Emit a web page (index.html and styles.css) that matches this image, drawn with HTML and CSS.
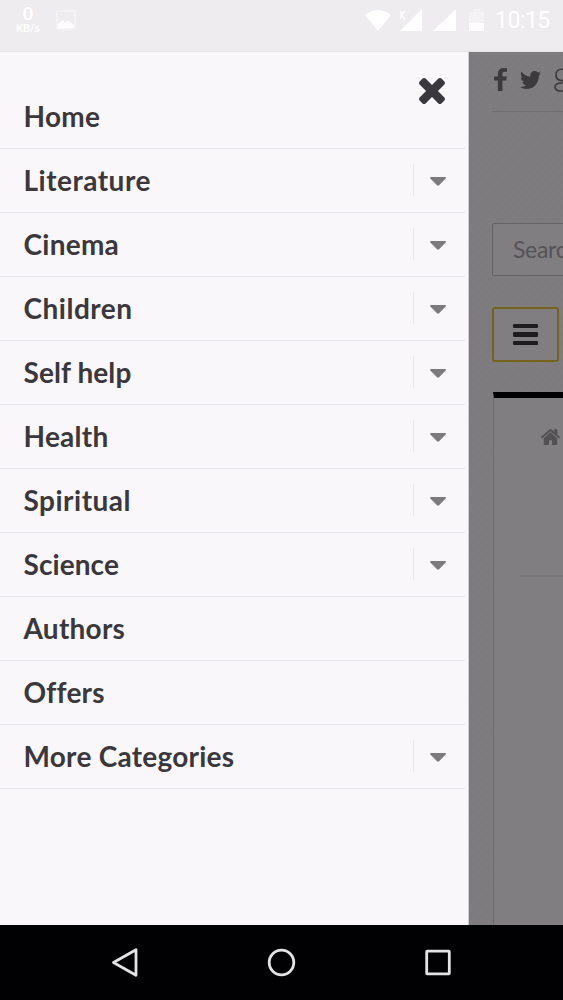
FILE: index.html
```html
<!DOCTYPE html>
<html lang="en">
<head>
<meta charset="utf-8">
<meta name="viewport" content="width=device-width, initial-scale=1">
<title>Menu</title>
<link rel="stylesheet" href="styles.css">
</head>
<body>
<div class="screen">
  <header class="status">
    <div class="speed"><span class="speed-num">0</span><span class="speed-unit">KB/s</span></div>
    <svg class="picture" viewBox="0 0 20 20"><path d="M1 1h18v18H1z" fill="none" stroke="currentColor" stroke-width="1.2" opacity=".6"/><path d="M2 15l4-5 3 3 3-2 6 4v3H2z" fill="currentColor"/></svg>
    <svg class="signals" viewBox="0 0 122 26">
      <path d="M0 6Q13-4 26 6L13 22Z"/>
      <path d="M35 22L57 0V22Z"/><path d="M36 2v8M40 2l-4 4 4 4" fill="none" stroke="currentColor" stroke-width="1.3"/>
      <path d="M68 22L91 0V22Z"/>
      <path d="M108 0h7v3h4v11h-15V3h4z" opacity=".35"/><path d="M104 14h15v8h-15z"/>
    </svg>
    <span class="clock">10:15</span>
  </header>
  <main class="view">
    <nav class="drawer">
      <svg class="close" viewBox="302 366 1188 1188"><path d="M1490 1322q0 40-28 68l-136 136q-28 28-68 28t-68-28l-294-294-294 294q-28 28-68 28t-68-28l-136-136q-28-28-28-68t28-68l294-294-294-294q-28-28-28-68t28-68l136-136q28-28 68-28t68 28l294 294 294-294q28-28 68-28t68 28l136 136q28 28 28 68t-28 68l-294 294 294 294q28 28 28 68z"/></svg>
      <ul class="menu">
        <li class="item">Home</li>
        <li class="item wide">Literature<span class="toggle"><svg class="caret" viewBox="0 0 16 9"><path d="M1 0h14q1.500.5.5 1.700L9 8.300q-1 .9-2 0L.5 1.700Q-.5.500 1 0z"/></svg></span></li>
        <li class="item">Cinema<span class="toggle"><svg class="caret" viewBox="0 0 16 9"><path d="M1 0h14q1.500.5.5 1.700L9 8.300q-1 .9-2 0L.5 1.700Q-.5.500 1 0z"/></svg></span></li>
        <li class="item wide">Children<span class="toggle"><svg class="caret" viewBox="0 0 16 9"><path d="M1 0h14q1.500.5.5 1.700L9 8.300q-1 .9-2 0L.5 1.700Q-.5.500 1 0z"/></svg></span></li>
        <li class="item tight">Self help<span class="toggle"><svg class="caret" viewBox="0 0 16 9"><path d="M1 0h14q1.500.5.5 1.700L9 8.300q-1 .9-2 0L.5 1.700Q-.5.500 1 0z"/></svg></span></li>
        <li class="item">Health<span class="toggle"><svg class="caret" viewBox="0 0 16 9"><path d="M1 0h14q1.500.5.5 1.700L9 8.300q-1 .9-2 0L.5 1.700Q-.5.500 1 0z"/></svg></span></li>
        <li class="item wide">Spiritual<span class="toggle"><svg class="caret" viewBox="0 0 16 9"><path d="M1 0h14q1.500.5.5 1.700L9 8.300q-1 .9-2 0L.5 1.700Q-.5.500 1 0z"/></svg></span></li>
        <li class="item tight">Science<span class="toggle"><svg class="caret" viewBox="0 0 16 9"><path d="M1 0h14q1.500.5.5 1.700L9 8.300q-1 .9-2 0L.5 1.700Q-.5.500 1 0z"/></svg></span></li>
        <li class="item">Authors</li>
        <li class="item">Offers</li>
        <li class="item">More Categories<span class="toggle"><svg class="caret" viewBox="0 0 16 9"><path d="M1 0h14q1.500.5.5 1.700L9 8.300q-1 .9-2 0L.5 1.700Q-.5.500 1 0z"/></svg></span></li>
      </ul>
    </nav>
    <section class="page">
      <div class="social">
        <svg class="facebook" viewBox="479 0 864 1664" preserveAspectRatio="none"><path d="M1343 12v264h-157q-86 0-116 36t-30 108v189h293l-39 296h-254v759h-306v-759h-255v-296h255v-218q0-186 104-288.5t277-102.500q147 0 228 12z"/></svg>
        <svg class="twitter" viewBox="108 256 1576 1280" preserveAspectRatio="none"><path d="M1684 408q-67 98-162 167 1 14 1 42 0 130-38 259.500t-115.500 248.500-184.500 210.500-258 146-323 54.500q-271 0-496-145 35 4 78 4 225 0 401-138-105-2-188-64.500t-114-159.500q33 5 61 5 43 0 85-11-112-23-185.500-111.500t-73.500-205.500v-4q68 38 146 41-66-44-105-115t-39-154q0-88 44-163 121 149 294.500 238.500t371.500 99.500q-8-38-8-74 0-134 94.500-228.500t228.500-94.500q140 0 236 102 109-21 205-78-37 115-142 178 93-10 186-50z"/></svg>
        <svg class="google" viewBox="0 0 18 24"><path d="M16 1H8.500C4.500 1 2 3.500 2 7s2.500 5.500 6 5.500S13 10 13 7 11 1 8 1M9 12.500c-2 2 4 3.500 4 6.500 0 2.500-2 4-6 4s-6-1.500-6-4 3-4 7-4" fill="none" stroke="currentColor" stroke-width="1.700"/></svg>
      </div>
      <div class="search">Search</div>
      <div class="burger"><i class="bar"></i><i class="bar"></i><i class="bar"></i></div>
      <div class="panel">
        <svg class="home" viewBox="89 253 1614 1283" preserveAspectRatio="none"><path d="M1472 992v480q0 26-19 45t-45 19h-384v-384h-256v384h-384q-26 0-45-19t-19-45v-480q0-1 .5-3t.5-3l575-474 575 474q1 2 1 6zm223-69l-62 74q-8 9-21 11h-3q-13 0-21-7l-692-577-692 577q-12 8-24 7-13-2-21-11l-62-74q-8-10-7-23.500t11-21.500l719-599q32-26 76-26t76 26l244 204v-195q0-14 9-23t23-9h192q14 0 23 9t9 23v408l219 182q10 8 11 21.500t-7 23.500z"/></svg>
        <div class="rule"></div>
      </div>
    </section>
  </main>
  <footer class="navbar">
    <svg class="key" viewBox="0 0 30 30"><path d="M3.500 14.500L26 1.700V27.300Z"/></svg>
    <svg class="key" viewBox="0 0 30 30"><circle cx="14.500" cy="14.500" r="12.300"/></svg>
    <svg class="key" viewBox="0 0 30 30"><rect x="3.700" y="3.200" width="22.600" height="22.600" rx=".5"/></svg>
  </footer>
</div>
</body>
</html>
```
FILE: styles.css
```css
* { box-sizing: border-box; }
body { margin: 0; font-family: Lato, "Liberation Sans", sans-serif; }
svg { display: block; fill: currentColor; flex: none; }
.screen { width: 563px; height: 1000px; display: flex; flex-direction: column; overflow: hidden; }

.status { height: 52px; flex: none; display: flex; align-items: flex-start; background: #eeecef; color: #fff; padding: 5px 0 0 14px; border-bottom: 1px solid #e6e4e7; }
.speed { width: 28px; display: flex; flex-direction: column; align-items: center; font-family: Roboto, sans-serif; }
.speed-num { font-size: 19px; line-height: 18px; font-weight: 500; }
.speed-unit { font-size: 11px; line-height: 11px; font-weight: 500; }
.picture { width: 20px; height: 20px; margin: 5px 0 0 14px; }
.signals { width: 122px; height: 26px; margin: 4px 0 0 289px; }
.clock { font: 23px/24px Roboto, sans-serif; margin: 4px 0 0 8px; letter-spacing: -.5px; white-space: nowrap; }

.view { flex: 1; min-height: 0; display: flex; }
.drawer { width: 469px; flex: none; display: flex; flex-direction: column; background: #f9f7fa; border-right: 1px solid #cfcdd1; color: #3a383c; }
.close { width: 26px; height: 26px; align-self: flex-end; margin: 26px 23px -19.500px 0; }
.menu { list-style: none; margin: 0; padding: 0 3px 0 0; }
.item { height: 64.050px; display: flex; align-items: center; justify-content: space-between; padding: 0 18px 1px 23.500px; font-size: 28px; font-weight: 700; letter-spacing: .25px; border-bottom: 1px solid #e8e6ea; }
.item.wide { letter-spacing: .5px; }
.item.tight { letter-spacing: .08px; }
.toggle { width: 34px; height: 32px; display: flex; align-items: center; justify-content: flex-end; border-left: 1px solid #e8e6ea; }
.caret { width: 16px; height: 9px; margin: 3px 1px 0 0; color: #7c7a7d; }

.page { flex: 1; min-width: 0; overflow: hidden; padding-left: 23px; background: repeating-linear-gradient(135deg, #7d7b7e 0 3px, #7e7c7f 3px 6px); color: #3c3a3d; }
.social { width: 90px; height: 60px; display: flex; align-items: flex-start; padding-top: 16px; border-bottom: 1px solid #6f6d70; }
.facebook { width: 13px; height: 23px; margin-left: 1.500px; }
.twitter { width: 21px; height: 18px; margin: 3px 0 0 13.500px; }
.google { width: 18px; height: 24px; margin-left: 13px; }
.search { width: 120px; height: 53px; margin-top: 111px; padding-left: 20px; border: 1px solid #656366; border-radius: 2px; background: #807e81; color: #555356; font-size: 23px; line-height: 51px; letter-spacing: -.3px; }
.burger { width: 67px; height: 55px; margin-top: 31px; display: flex; flex-direction: column; align-items: center; justify-content: center; gap: 4px; background: #807e81; border: 2px solid #75631b; border-radius: 3px; }
.bar { width: 25px; height: 4.500px; border-radius: 1px; background: #1e1c1f; }
.panel { width: 120px; height: 540px; margin: 30px 0 0 1px; padding: 31px 0 0 47px; border-top: 6px solid #010002; border-left: 1px solid #6f6d70; background: #807e81; color: #535154; }
.home { width: 19px; height: 16px; }
.rule { width: 100px; height: 2px; margin: 130px 0 0 -20px; background: #79777a; }

.navbar { height: 75px; flex: none; display: flex; justify-content: space-between; align-items: center; padding: 0 110px; background: #010002; }
.key { width: 30px; height: 30px; fill: none; stroke: #e4e2e5; stroke-width: 2.800; stroke-linejoin: round; }
```
